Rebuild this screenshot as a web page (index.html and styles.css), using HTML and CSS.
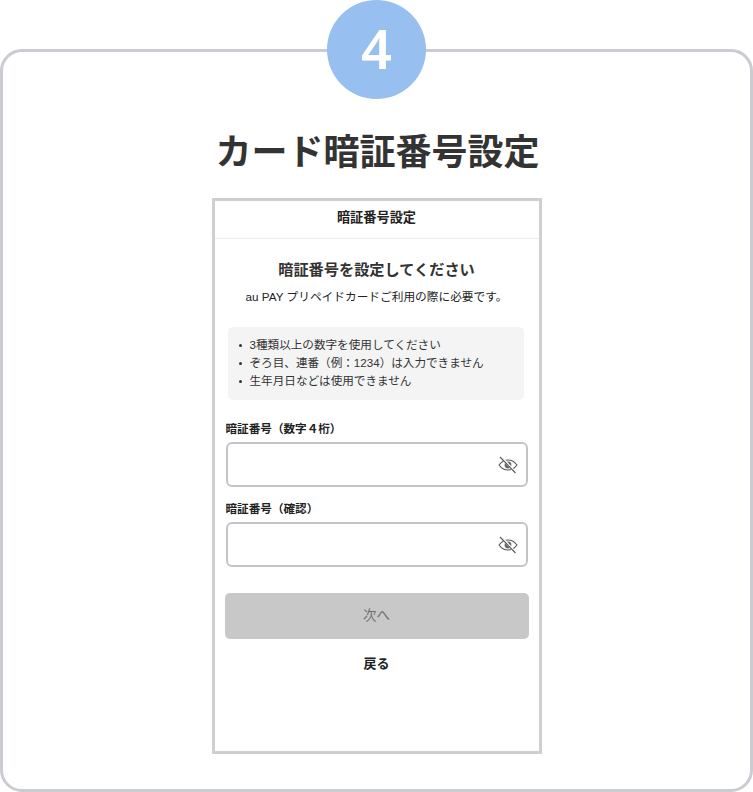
FILE: index.html
```html
<!DOCTYPE html>
<html lang="ja">
<head>
    <meta charset="UTF-8">
    <title>カード暗証番号設定</title>
    <link rel="stylesheet" href="styles.css">
</head>
<body>

    <div class="card">
        <div class="step">4</div>
        <h1 class="title">カード暗証番号設定</h1>

        <div class="phone">
            <div class="phone-head">暗証番号設定</div>
            <div class="phone-body">
                <h2 class="lead">暗証番号を設定してください</h2>
                <p class="sub">au PAY プリペイドカードご利用の際に必要です。</p>

                <ul class="notes">
                    <li>3種類以上の数字を使用してください</li>
                    <li>ぞろ目、連番（例：1234）は入力できません</li>
                    <li>生年月日などは使用できません</li>
                </ul>

                <label class="field-label">暗証番号（数字４桁）</label>
                <div class="field">
                    <svg class="eye" width="20" height="18" viewBox="0 0 20 18">
                        <path d="M1 9C3.5 5.600 6.500 4 10 4s6.500 1.600 9 5c-2.500 3.400-5.500 5-9 5s-6.500-1.600-9-5z" fill="none" stroke="#555" stroke-width="1.100"/>
                        <circle cx="10" cy="9" r="3.400" fill="#666"/>
                        <path d="M2.800 .8l15 16" stroke="#fff" stroke-width="2.400"/>
                        <path d="M2 1l15.500 16" stroke="#555" stroke-width="1.100"/>
                    </svg>
                </div>

                <label class="field-label">暗証番号（確認）</label>
                <div class="field">
                    <svg class="eye" width="20" height="18" viewBox="0 0 20 18">
                        <path d="M1 9C3.5 5.600 6.500 4 10 4s6.500 1.600 9 5c-2.500 3.400-5.500 5-9 5s-6.500-1.600-9-5z" fill="none" stroke="#555" stroke-width="1.100"/>
                        <circle cx="10" cy="9" r="3.400" fill="#666"/>
                        <path d="M2.800 .8l15 16" stroke="#fff" stroke-width="2.400"/>
                        <path d="M2 1l15.500 16" stroke="#555" stroke-width="1.100"/>
                    </svg>
                </div>

                <button class="next" type="button">次へ</button>
                <div class="back">戻る</div>
            </div>
        </div>
    </div>

</body>
</html>
```

FILE: styles.css
```css
html, body {
    margin: 0;
    padding: 0;
}
body {
    width: 753px;
    height: 792px;
    overflow: hidden;
    background-color: #fff;
    font-family: "Liberation Sans", "Noto Sans CJK JP", sans-serif;
    color: #222;
}
.card {
    position: relative;
    box-sizing: border-box;
    width: 753px;
    height: 743px;
    margin-top: 49px;
    padding-top: 77px;
    border: 3px solid #c9ccd0;
    border-radius: 22px;
    display: flex;
    flex-direction: column;
    align-items: center;
}
.step {
    position: absolute;
    top: -52px;
    left: 324px;
    width: 99px;
    height: 99px;
    border-radius: 50%;
    background-color: #97bfef;
    color: #fff;
    font-family: "Noto Sans", sans-serif;
    font-size: 54px;
    font-weight: 600;
    line-height: 96px;
    text-align: center;
}
.title {
    margin: 0 0 21px;
    padding-left: 2px;
    font-size: 36px;
    font-weight: 700;
    line-height: 48px;
    color: #333;
}
.phone {
    box-sizing: border-box;
    width: 330px;
    height: 556px;
    border: 3px solid #cfcfcf;
}
.phone-head {
    height: 37px;
    line-height: 33px;
    border-bottom: 1px solid #ececec;
    text-align: center;
    font-size: 13.2px;
    font-weight: 700;
}
.phone-body {
    padding: 0 10px;
}
.lead {
    margin: 20px 0 0;
    font-size: 15.2px;
    font-weight: 700;
    line-height: 22px;
    text-align: center;
    color: #333;
}
.sub {
    margin: 8px 0 0;
    font-size: 11.7px;
    line-height: 16px;
    text-align: center;
}
.notes {
    list-style: none;
    margin: 22px 5px 0 3px;
    padding: 9px 0 10px 22px;
    background-color: #f4f4f4;
    border-radius: 5px;
    font-size: 11.6px;
    line-height: 18px;
    color: #333;
}
.notes li {
    position: relative;
}
.notes li::before {
    content: "";
    position: absolute;
    left: -11px;
    top: 8px;
    width: 3px;
    height: 3px;
    border-radius: 50%;
    background-color: #333;
}
.field-label {
    display: block;
    margin-top: 20px;
    padding-left: 1px;
    font-size: 11.6px;
    font-weight: 700;
    line-height: 18px;
}
.field {
    box-sizing: border-box;
    height: 45px;
    margin: 4px 1px 0;
    padding-right: 8px;
    border: 2px solid #c4c4c4;
    border-radius: 6px;
    display: flex;
    align-items: center;
    justify-content: flex-end;
}
.field + .field-label {
    margin-top: 13px;
}
.next {
    display: block;
    width: 100%;
    height: 46px;
    margin-top: 26px;
    padding: 0 0 4px;
    border: none;
    border-radius: 5px;
    background-color: #c8c8c8;
    color: #6f6f6f;
    font-family: inherit;
    font-size: 13.5px;
}
.back {
    margin-top: 15px;
    text-align: center;
    font-size: 13px;
    font-weight: 700;
    line-height: 20px;
}
```
